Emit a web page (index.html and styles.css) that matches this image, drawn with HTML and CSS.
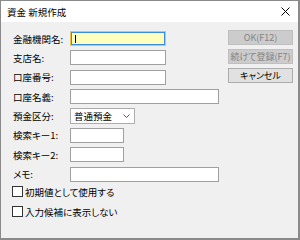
FILE: index.html
```html
<!DOCTYPE html>
<html>
<head>
    <title>資金 新規作成</title>
    <link rel="stylesheet" href="styles.css">
</head>
<body>
    <div class="window">
        <div class="titlebar">
            <span>資金 新規作成</span>
            <svg class="close" width="9" height="9" viewBox="0 0 9 9">
                <path d="M0.5 0.5 L8.5 8.5 M8.5 0.5 L0.5 8.5" stroke="#000" stroke-width="1"/>
            </svg>
        </div>
        <div class="content">
            <div class="form">
                <div class="fields">
                    <span class="label">金融機関名:</span>
                    <div class="field w-m active"><span class="caret"></span></div>
                    <span class="label">支店名:</span>
                    <div class="field w-m"></div>
                    <span class="label">口座番号:</span>
                    <div class="field w-m"></div>
                    <span class="label">口座名義:</span>
                    <div class="field w-l"></div>
                    <span class="label">預金区分:</span>
                    <div class="select w-sel">
                        <span>普通預金</span>
                        <svg width="7" height="4" viewBox="0 0 7 4">
                            <path d="M0.5 0.5 L3.5 3.5 L6.5 0.5" fill="none" stroke="#555" stroke-width="1"/>
                        </svg>
                    </div>
                    <span class="label">検索キー1:</span>
                    <div class="field w-s"></div>
                    <span class="label">検索キー2:</span>
                    <div class="field w-s"></div>
                    <span class="label">メモ:</span>
                    <div class="field w-l"></div>
                </div>
                <div class="check"><span class="box"></span>初期値として使用する</div>
                <div class="check"><span class="box"></span>入力候補に表示しない</div>
            </div>
            <div class="buttons">
                <div class="btn disabled">OK(F12)</div>
                <div class="btn disabled">続けて登録(F7)</div>
                <div class="btn">キャンセル</div>
            </div>
        </div>
    </div>
</body>
</html>
```

FILE: styles.css
```css
body {
    margin: 0;
    font-family: "Noto Sans CJK JP", sans-serif;
    font-size: 9.5px;
    font-feature-settings: "palt";
    color: #000;
}
.window {
    width: 300px;
    height: 240px;
    box-sizing: border-box;
    border: solid #8a8a8a;
    border-width: 1px 2px 2px 1px;
    background: #f0f0f0;
    display: flex;
    flex-direction: column;
}
.titlebar {
    height: 21px;
    background: #fff;
    display: flex;
    align-items: center;
    justify-content: space-between;
    padding: 0 8px 0 6px;
}
.content {
    display: flex;
    padding-top: 8px;
}
.form {
    padding-left: 11px;
}
.fields {
    display: grid;
    grid-template-columns: 57px auto;
    grid-auto-rows: 15px;
    row-gap: 4.4px;
    align-items: center;
    padding-top: 1px;
    padding-left: 1px;
}
.field {
    height: 15px;
    box-sizing: border-box;
    border: 1px solid #a0a0a0;
    background: #fff;
}
.field.active {
    background: #ffffc0;
    border-color: #f0c44a;
    box-shadow: inset 0 0 0 1px #3a8ee0;
    padding: 3px 0 0 4px;
}
.caret {
    display: block;
    width: 1px;
    height: 8px;
    background: #000;
}
.select {
    height: 16px;
    box-sizing: border-box;
    border: 1px solid #adadad;
    background: #fff;
    display: flex;
    align-items: center;
    justify-content: space-between;
    padding: 0 4px 0 3px;
}
.w-m { width: 96px; }
.w-l { width: 149px; }
.w-s { width: 54px; }
.w-sel { width: 65px; }
.check {
    height: 20px;
    display: flex;
    align-items: center;
    gap: 2px;
}
.box {
    width: 11px;
    height: 11px;
    box-sizing: border-box;
    border: 1px solid #333;
    background: #fff;
}
.buttons {
    margin-left: auto;
    margin-right: 5px;
    display: flex;
    flex-direction: column;
    gap: 4px;
}
.btn {
    width: 65px;
    height: 15px;
    box-sizing: border-box;
    border: 1px solid #adadad;
    background: #e1e1e1;
    display: flex;
    align-items: center;
    justify-content: center;
    font-size: 9px;
    white-space: nowrap;
}
.btn.disabled {
    background: #cccccc;
    border-color: #bfbfbf;
    color: #838383;
}
```
